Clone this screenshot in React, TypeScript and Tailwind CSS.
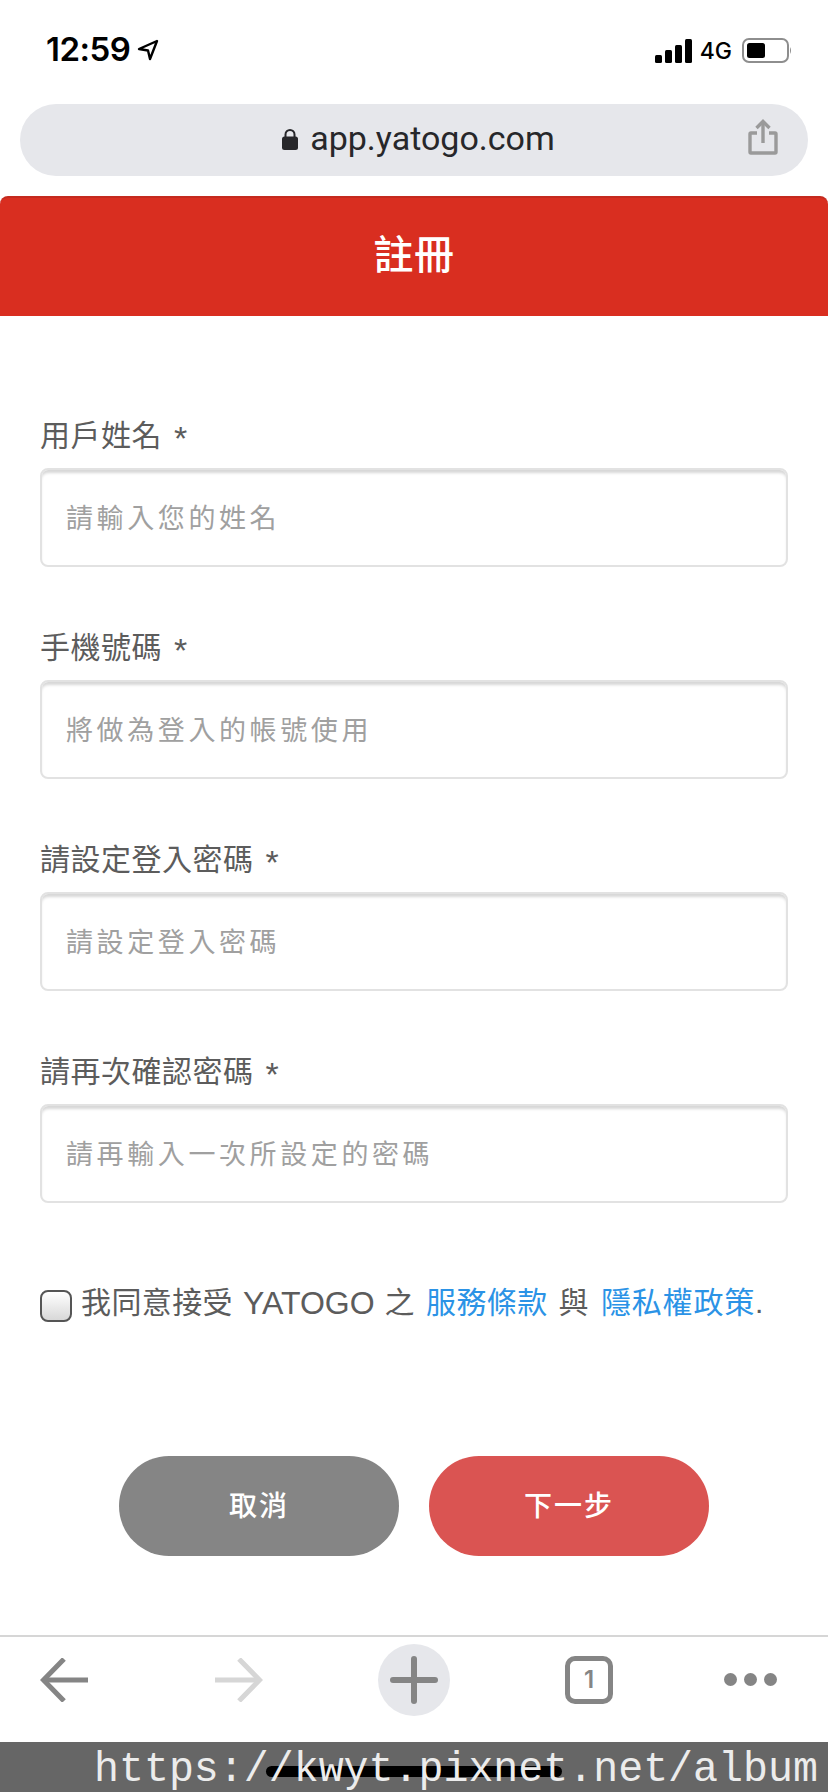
import React from 'react'

const cjk = "font-['Liberation_Sans','Noto_Sans_CJK_TC',sans-serif]"

const fields = [
  { label: '用戶姓名', hint: '請輸入您的姓名' },
  { label: '手機號碼', hint: '將做為登入的帳號使用' },
  { label: '請設定登入密碼', hint: '請設定登入密碼' },
  { label: '請再次確認密碼', hint: '請再輸入一次所設定的密碼' },
]

const StatusBar = () => (
  <div className="h-[104px] flex items-start justify-between pt-[29px] pl-[46px] pr-[36px] text-black font-['Inter',sans-serif]">
    <div className="flex items-center h-[40px]">
      <span className="text-[33px] font-semibold leading-none tracking-[-0.5px]">12:59</span>
      <svg width="22" height="22" viewBox="0 0 22 22" className="ml-[7px] mt-[1px]" fill="none" stroke="#000" strokeWidth="2.4" strokeLinejoin="round">
        <path d="M20 2 L2 10 L11 11.5 L13 20 Z" />
      </svg>
    </div>
    <div className="flex items-center h-[44px]">
      <svg width="37" height="24" viewBox="0 0 37 24" fill="#000" className="-ml-[1px]">
        <rect x="0" y="16" width="7" height="8" rx="1.5" />
        <rect x="10" y="11" width="7" height="13" rx="1.5" />
        <rect x="20" y="6" width="7" height="18" rx="1.5" />
        <rect x="30" y="0" width="7" height="24" rx="1.5" />
      </svg>
      <span className="ml-[8px] text-[23px] font-medium leading-none">4G</span>
      <svg width="50" height="26" viewBox="0 0 50 26" className="ml-[10px]" fill="none">
        <rect x="1" y="1" width="45" height="23" rx="6" stroke="#8e8e8e" strokeWidth="2" />
        <rect x="5" y="5" width="18" height="15" rx="2.5" fill="#000" />
        <path d="M48 9 Q50 12.5 48 16 Z" fill="#8e8e8e" />
      </svg>
    </div>
  </div>
)

const UrlBar = () => (
  <div className="mx-5 h-[72px] rounded-[36px] bg-[#e6e7eb] relative flex items-center justify-center">
    <div className="flex items-center ml-[9px] -mt-[4px]">
      <svg width="16" height="21" viewBox="0 0 16 21" fill="#27272a" className="mt-[2px]">
        <path d="M3.5 8 V5.5 a4.5 4.5 0 0 1 9 0 V8" fill="none" stroke="#27272a" strokeWidth="2" />
        <rect x="0" y="7.5" width="16" height="13.5" rx="2.5" />
      </svg>
      <span className="ml-[12px] text-[34px] leading-none text-[#27272a] font-['Roboto',sans-serif]">app.yatogo.com</span>
    </div>
    <svg width="30" height="36" viewBox="0 0 30 36" className="absolute right-[30px] top-[15px]" fill="none" stroke="#9a9a9a" strokeWidth="3.4">
      <path d="M9 14 H3 a1 1 0 0 0 -1 1 V33 a1 1 0 0 0 1 1 H27 a1 1 0 0 0 1 -1 V15 a1 1 0 0 0 -1 -1 H21" />
      <path d="M15 24 V3" />
      <path d="M8.5 9 L15 2.5 L21.5 9" />
    </svg>
  </div>
)

const Field = ({ label, hint }: { label: string; hint: string }) => (
  <div className="mb-[57px]">
    <div className="h-[44px] mb-3 pt-[3px] flex items-center text-[30px] tracking-[0.5px] leading-none text-[#5c5c5c]">
      {label}
      <span className="ml-[12px] text-[34px] mt-[5px]">*</span>
    </div>
    <input
      placeholder={hint}
      className={`${cjk} block w-full h-[99px] box-border rounded-lg border-2 border-[#e2e2e2] pl-[24px] pr-[24px] pt-[4px] text-[27px] tracking-[3.6px] text-[#555] placeholder:text-[#a0a0a0] shadow-[inset_0_4px_3px_-1px_rgba(0,0,0,0.16)] outline-none`}
    />
  </div>
)

const BottomBar = () => (
  <div className="h-[107px] pb-5 border-t-2 border-[#d6d6d6] flex items-center relative">
    <svg width="48" height="44" viewBox="0 0 48 44" className="ml-10" fill="none" stroke="#858585" strokeWidth="5">
      <path d="M48 22 H3" />
      <path d="M24 1 L3.5 22 L24 43" />
    </svg>
    <svg width="48" height="44" viewBox="0 0 48 44" className="ml-[127px]" fill="none" stroke="#d6d6d6" strokeWidth="5">
      <path d="M0 22 H45" />
      <path d="M24 1 L44.5 22 L24 43" />
    </svg>
    <div className="ml-[115px] w-[72px] h-[72px] rounded-full bg-[#e6e7eb] flex items-center justify-center">
      <svg width="48" height="48" viewBox="0 0 48 48" stroke="#858585" strokeWidth="6" strokeLinecap="round">
        <path d="M24 3 V45" />
        <path d="M3 24 H45" />
      </svg>
    </div>
    <div className="ml-[115px] w-[48px] h-[48px] rounded-[10px] border-[5px] border-[#858585] flex items-center justify-center text-[24px] font-semibold text-[#858585] font-['Inter',sans-serif] leading-none">
      1
    </div>
    <div className="ml-[111px] flex gap-[7px]">
      <div className="w-[13px] h-[13px] rounded-full bg-[#858585]" />
      <div className="w-[13px] h-[13px] rounded-full bg-[#858585]" />
      <div className="w-[13px] h-[13px] rounded-full bg-[#858585]" />
    </div>
  </div>
)

const App = () => {
  return (
    <div className={`${cjk} w-[828px] h-[1792px] bg-white flex flex-col overflow-hidden`}>
      <StatusBar />
      <UrlBar />

      <div className="mt-5 h-[120px] pb-[4px] rounded-t-[8px] border-t-2 border-[#c42a1e] bg-[#d92e20] flex items-center justify-center text-white text-[40px] font-medium tracking-[0.5px]">
        註冊
      </div>

      <div className="px-10 pt-24">
        {fields.map((f) => (
          <Field key={f.label} label={f.label} hint={f.hint} />
        ))}

        <div className="mt-[78px] h-[44px] flex items-center text-[30px] tracking-[0.4px] leading-none text-[#5c5c5c] whitespace-nowrap">
          <div className="mt-[6px] w-[32px] h-[32px] box-border rounded-[8px] border-2 border-[#555] bg-gradient-to-b from-white to-[#d8d8d8] shrink-0" />
          <span className="ml-[9px]">我同意接受</span>
          <span className="ml-[10px] text-[32px] tracking-normal">YATOGO</span>
          <span className="ml-[10px]">之</span>
          <a className="ml-[11px] text-[#2b93e6]">服務條款</a>
          <span className="ml-[11px]">與</span>
          <a className="ml-[12px] text-[#2b93e6] tracking-[0.8px]">隱私權政策</a>
          <span>.</span>
        </div>
      </div>

      <div className="mt-[131px] flex justify-center gap-[30px] text-white text-[28px] font-medium tracking-[2px]">
        <button className="w-[280px] h-[100px] pt-[2px] rounded-[50px] bg-[#858585]">取消</button>
        <button className="w-[280px] h-[100px] pt-[2px] rounded-[50px] bg-[#da5452]">下一步</button>
      </div>

      <div className="mt-[79px]">
        <BottomBar />
      </div>

      <div className="relative h-[50px] bg-[#666] flex items-center">
        <div className="absolute left-[266px] top-[24px] w-[296px] h-[11px] rounded-full bg-black" />
        <span className="relative ml-[94px] mt-[6px] text-[41.6px] leading-none text-[#ececec] font-['Liberation_Mono',monospace] whitespace-nowrap">
          https://kwyt.pixnet.net/album
        </span>
      </div>
    </div>
  )
}

export default App
